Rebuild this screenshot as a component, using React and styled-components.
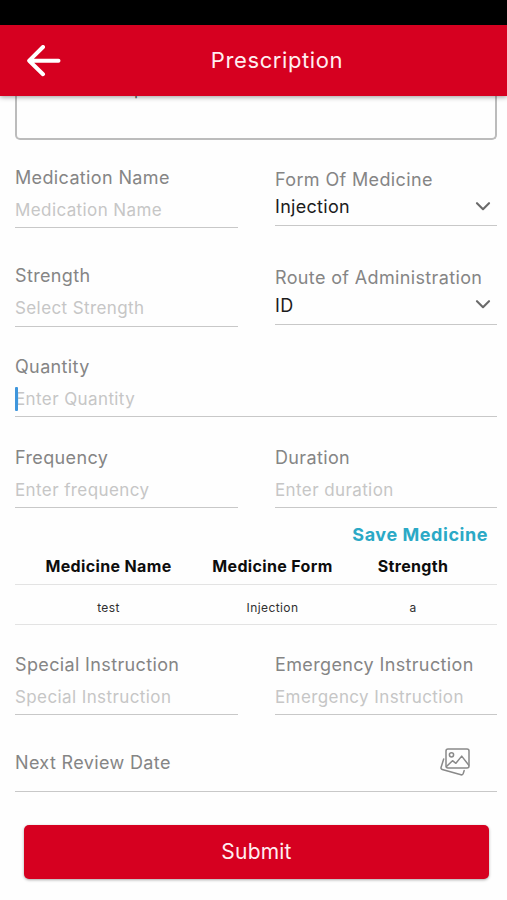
import React from "react";
import styled, { createGlobalStyle } from "styled-components";

const GlobalStyle = createGlobalStyle`
  * { box-sizing: border-box; }
  body {
    margin: 0;
    background: #fefefe;
    font-family: Inter, "Liberation Sans", sans-serif;
  }
  button, input { font-family: inherit; }
`;

const Screen = styled.div`
  width: 507px;
  height: 900px;
  display: flex;
  flex-direction: column;
  overflow: hidden;
  background: #fefefe;
`;

const StatusBar = styled.div`
  flex: none;
  height: 25px;
  background: #000;
`;

const Header = styled.header`
  flex: none;
  height: 71px;
  display: grid;
  grid-template-columns: 87px 1fr 40px;
  align-items: center;
  background: #d60020;
  box-shadow: 0 1px 5px rgba(0, 0, 0, 0.4);
  z-index: 1;
`;

const BackButton = styled.button`
  display: flex;
  justify-content: center;
  padding: 0;
  border: 0;
  background: none;
  color: #fff;
`;

const Title = styled.h1`
  margin: 0;
  padding-bottom: 1px;
  text-align: center;
  font-size: 22px;
  line-height: 28px;
  font-weight: 400;
  letter-spacing: 0.6px;
  color: #ffeef0;
`;

const Form = styled.main`
  flex: 1;
  display: flex;
  flex-direction: column;
  padding: 0 10px 0 15px;
`;

const NotesBox = styled.div`
  height: 44px;
  padding-left: 117px;
  border: 2px solid #bcbcbc;
  border-top: 0;
  border-radius: 0 0 5px 5px;
  font-size: 17px;
  line-height: 20px;
  color: #666;
`;

const NotesText = styled.div`
  margin-top: -17px;
`;

const FieldRow = styled.div`
  display: grid;
  grid-template-columns: ${(p) => (p.$single ? "1fr" : "223px 222px")};
  column-gap: 37px;
  margin-top: ${(p) => p.$gap}px;
  height: 67px;
`;

const FieldBox = styled.label`
  display: flex;
  flex-direction: column;
  height: ${(p) => (p.$select ? 65 : 67)}px;
  padding-top: ${(p) => (p.$select ? 4.5 : 0.6)}px;
  border-bottom: 1px solid #c8c8c8;
`;

const Label = styled.span`
  flex: none;
  font-size: 18px;
  line-height: ${(p) => (p.$tight ? 28 : 32)}px;
  letter-spacing: 0.36px;
  color: #858585;
  white-space: nowrap;
`;

const Input = styled.div`
  display: flex;
  align-items: center;
  height: 32px;
  font-size: 17px;
  letter-spacing: 0.4px;
  color: #c6c6c6;
  white-space: nowrap;
`;

const Caret = styled.span`
  width: 3px;
  height: 24px;
  margin-right: -3px;
  border-radius: 1px;
  background: #3f96dc;
  z-index: 1;
`;

const SelectValue = styled.div`
  display: flex;
  align-items: center;
  justify-content: space-between;
  height: 28px;
  margin-top: -1px;
  padding-right: 6px;
  font-size: 18px;
  letter-spacing: 0.3px;
  color: #1c1c1c;
`;

const SaveButton = styled.button`
  align-self: flex-end;
  height: 26px;
  margin: 14px 9px 0 0;
  padding: 0;
  border: 0;
  background: none;
  font-size: 18px;
  line-height: 26px;
  font-weight: 650;
  letter-spacing: 0.55px;
  color: #2ba9c6;
`;

const TableRow = styled.div`
  display: grid;
  grid-template-columns: 187px 141px 140px;
  align-items: center;
  height: ${(p) => (p.$head ? 37 : 40)}px;
  padding-top: ${(p) => (p.$head ? 0 : 5)}px;
  border-bottom: 1px solid #e3e3e3;
  text-align: center;
  font-size: ${(p) => (p.$head ? 16 : 12)}px;
  font-weight: ${(p) => (p.$head ? 650 : 400)};
  letter-spacing: ${(p) => (p.$head ? 0.35 : 0.4)}px;
  color: ${(p) => (p.$head ? "#0d0d0d" : "#303030")};
`;

const ReviewRow = styled.div`
  display: flex;
  align-items: center;
  justify-content: space-between;
  height: 77px;
  padding: 19px 27px 0 0;
  border-bottom: 1px solid #c8c8c8;
`;

const SubmitButton = styled.button`
  height: 54px;
  margin: 33px 8px 0 9px;
  padding: 0 0 2px;
  border: 0;
  border-radius: 5px;
  background: #d60020;
  box-shadow: 0 1px 3px rgba(0, 0, 0, 0.35);
  font-size: 21px;
  letter-spacing: 0.2px;
  color: #ffeef0;
`;

const GallerySvg = styled.svg`
  margin-bottom: 1px;
`;

const BackArrow = () => (
  <svg width="34" height="32" viewBox="0 0 34 32" fill="none" stroke="currentColor" strokeWidth="4" strokeLinecap="round" strokeLinejoin="round">
    <path d="M16 2 2.2 15.7l13.8 13.5M3 15.7h28.5" />
  </svg>
);

const Chevron = () => (
  <svg width="16" height="10" viewBox="0 0 16 10" fill="none" stroke="#6a6a6a" strokeWidth="2.1" strokeLinecap="round" strokeLinejoin="round">
    <path d="m2 1.2 6 6 6-6" />
  </svg>
);

const GalleryIcon = () => (
  <GallerySvg width="30" height="28" viewBox="0 0 30 28" fill="none" stroke="#898989" strokeWidth="1.5" strokeLinecap="round" strokeLinejoin="round">
    <rect x="6" y="1" width="23" height="19" rx="2" />
    <circle cx="11.5" cy="6.8" r="2.1" />
    <path d="m6.5 18.5 6-5.8 3.4 2.6 5.8-7.2 7 9" />
    <path d="M3.7 11 1.1 19.3q-.5 1.7 1.2 2.2L21 26.8q1.7.4 2.2-1.2l1-3" />
  </GallerySvg>
);

const Field = ({ label, placeholder, focused }) => (
  <FieldBox>
    <Label>{label}</Label>
    <Input>
      {focused && <Caret />}
      {placeholder}
    </Input>
  </FieldBox>
);

const Select = ({ label, value }) => (
  <FieldBox $select>
    <Label $tight>{label}</Label>
    <SelectValue>
      {value}
      <Chevron />
    </SelectValue>
  </FieldBox>
);

export default function App() {
  return (
    <>
      <GlobalStyle />
      <Screen>
        <StatusBar />
        <Header>
          <BackButton aria-label="Back">
            <BackArrow />
          </BackButton>
          <Title>Prescription</Title>
        </Header>
        <Form>
          <NotesBox>
            <NotesText>p</NotesText>
          </NotesBox>
          <FieldRow $gap={21}>
            <Field label="Medication Name" placeholder="Medication Name" />
            <Select label="Form Of Medicine" value="Injection" />
          </FieldRow>
          <FieldRow $gap={31.5}>
            <Field label="Strength" placeholder="Select Strength" />
            <Select label="Route of Administration" value="ID" />
          </FieldRow>
          <FieldRow $single $gap={23.5}>
            <Field label="Quantity" placeholder="Enter Quantity" focused />
          </FieldRow>
          <FieldRow $gap={24}>
            <Field label="Frequency" placeholder="Enter frequency" />
            <Field label="Duration" placeholder="Enter duration" />
          </FieldRow>
          <SaveButton>Save Medicine</SaveButton>
          <TableRow $head>
            <span>Medicine Name</span>
            <span>Medicine Form</span>
            <span>Strength</span>
          </TableRow>
          <TableRow>
            <span>test</span>
            <span>Injection</span>
            <span>a</span>
          </TableRow>
          <FieldRow $gap={23}>
            <Field label="Special Instruction" placeholder="Special Instruction" />
            <Field label="Emergency Instruction" placeholder="Emergency Instruction" />
          </FieldRow>
          <ReviewRow>
            <Label>Next Review Date</Label>
            <GalleryIcon />
          </ReviewRow>
          <SubmitButton>Submit</SubmitButton>
        </Form>
      </Screen>
    </>
  );
}
